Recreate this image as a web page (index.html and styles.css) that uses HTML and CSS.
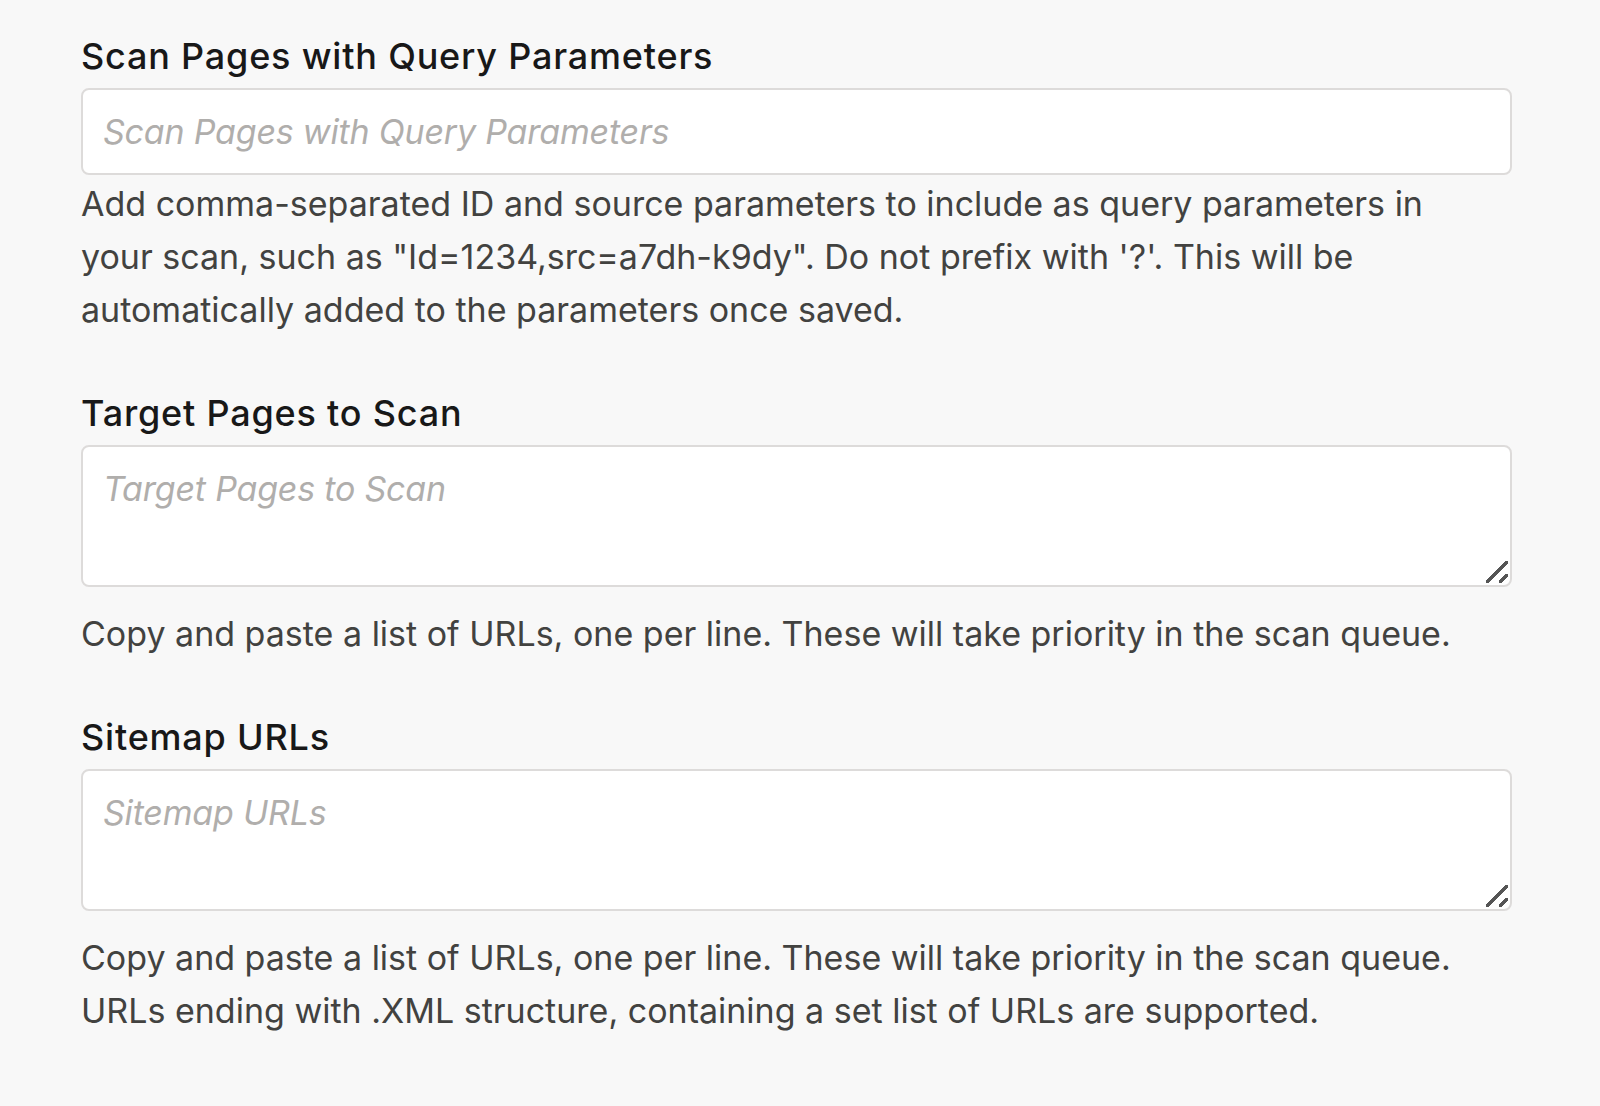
FILE: index.html
```html
<!DOCTYPE html>
<html lang="en">
  <head>
    <meta charset="UTF-8" />
    <meta name="viewport" content="width=device-width, initial-scale=1.0" />
    <title>Scan Settings</title>
    <link rel="stylesheet" href="styles.css">
  </head>
  <body>
    <div class="scan-form">
      <div class="field">
        <label class="field-label" for="queryParams">Scan Pages with Query Parameters</label>
        <input class="field-input" type="text" id="queryParams" placeholder="Scan Pages with Query Parameters" />
        <p class="field-help">Add comma-separated ID and source parameters to include as query parameters in your scan, such as "Id=1234,src=a7dh-k9dy". Do not prefix with '?'. This will be automatically added to the parameters once saved.</p>
      </div>
      <div class="field">
        <label class="field-label" for="targetPages">Target Pages to Scan</label>
        <div class="area-wrap">
          <textarea class="field-area" id="targetPages" placeholder="Target Pages to Scan"></textarea>
          <span class="grip"></span>
        </div>
        <p class="field-help help-area">Copy and paste a list of URLs, one per line. These will take priority in the scan queue.</p>
      </div>
      <div class="field">
        <label class="field-label" for="sitemapUrls">Sitemap URLs</label>
        <div class="area-wrap">
          <textarea class="field-area" id="sitemapUrls" placeholder="Sitemap URLs"></textarea>
          <span class="grip"></span>
        </div>
        <p class="field-help help-area">Copy and paste a list of URLs, one per line. These will take priority in the scan queue.<br />URLs ending with .XML structure, containing a set list of URLs are supported.</p>
      </div>
    </div>
  </body>
</html>
```

FILE: styles.css
```css
* {
  margin: 0;
  padding: 0;
  box-sizing: border-box;
}

body {
  background: #f8f8f8;
  font-family: Inter, Lato, sans-serif;
  color: #3e3e3c;
}

.scan-form {
  display: flex;
  flex-direction: column;
  gap: 57px;
  width: 1512px;
  padding: 36px 0 0 81px;
}

.field {
  display: flex;
  flex-direction: column;
}

.field-label {
  display: block;
  font-size: 36px;
  line-height: 40px;
  font-weight: 500;
  letter-spacing: 0.8px;
  color: #181818;
  margin-bottom: 12px;
}

.field-input, .field-area {
  width: 100%;
  border: 2px solid #dddbda;
  border-radius: 8px;
  background: #fff;
  font-family: Inter, Lato, sans-serif;
  font-size: 34px;
  line-height: 41px;
  color: #3e3e3c;
  outline: none;
}

.field-input {
  height: 87px;
  padding: 0 20px;
}

.field-area {
  display: block;
  height: 142px;
  padding: 21px 20px;
  resize: none;
}

.field-input::placeholder, .field-area::placeholder {
  color: #b0aeac;
  font-style: italic;
  letter-spacing: -0.2px;
}

.area-wrap {
  position: relative;
}

.grip {
  position: absolute;
  right: 4px;
  bottom: 4px;
  width: 22px;
  height: 22px;
  background:
    linear-gradient(135deg, transparent 44%, #555 44%, #555 56%, transparent 56%) 0 0 / 22px 22px no-repeat,
    linear-gradient(135deg, transparent 38%, #555 38%, #555 62%, transparent 62%) 13px 13px / 9px 9px no-repeat;
}

.field-help {
  font-size: 34px;
  line-height: 53px;
  color: #424240;
  margin-top: 2px;
  padding-right: 40px;
}

.help-area {
  margin-top: 20px;
}
```
